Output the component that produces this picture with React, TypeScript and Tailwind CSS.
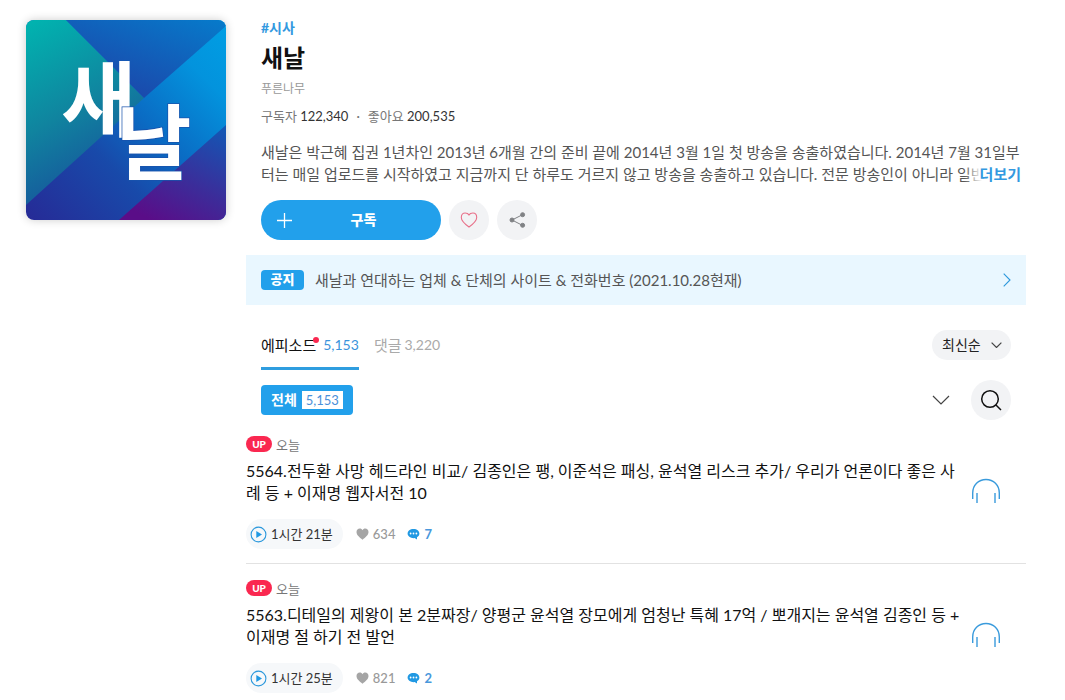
import React from "react";

type Episode = {
  id: number;
  title: string;
  date: string;
  length: string;
  likes: number;
  comments: number;
};

const episodes: Episode[] = [
  {
    id: 5564,
    title:
      "5564.전두환 사망 헤드라인 비교/ 김종인은 팽, 이준석은 패싱, 윤석열 리스크 추가/ 우리가 언론이다 좋은 사례 등 + 이재명 웹자서전 10",
    date: "오늘",
    length: "1시간 21분",
    likes: 634,
    comments: 7,
  },
  {
    id: 5563,
    title:
      "5563.디테일의 제왕이 본 2분짜장/ 양평군 윤석열 장모에게 엄청난 특혜 17억 / 뽀개지는 윤석열 김종인 등 + 이재명 절 하기 전 발언",
    date: "오늘",
    length: "1시간 25분",
    likes: 821,
    comments: 2,
  },
];

function Cover() {
  return (
    <svg
      viewBox="0 0 200 200"
      role="img"
      aria-label="새날"
      className="size-[200px] shrink-0 rounded-lg shadow-[0_0_10px_rgba(0,0,0,0.2)]"
    >
      <defs>
        <linearGradient id="teal" x1="0" y1="0" x2="0.35" y2="1">
          <stop offset="0" stopColor="#00b5b0" />
          <stop offset="0.55" stopColor="#10849f" />
          <stop offset="1" stopColor="#17539c" />
        </linearGradient>
        <linearGradient id="top" x1="0.3" y1="0.9" x2="1" y2="0">
          <stop offset="0" stopColor="#1b48ab" />
          <stop offset="1" stopColor="#067bcb" />
        </linearGradient>
        <linearGradient id="band" x1="1" y1="0" x2="0" y2="1">
          <stop offset="0" stopColor="#009fe4" />
          <stop offset="0.2" stopColor="#0393dd" />
          <stop offset="0.45" stopColor="#0a6cc4" />
          <stop offset="0.65" stopColor="#184aaa" />
          <stop offset="1" stopColor="#262a96" />
        </linearGradient>
        <linearGradient id="low" x1="0.9" y1="0" x2="0.3" y2="1">
          <stop offset="0" stopColor="#1456b4" />
          <stop offset="0.55" stopColor="#3b2d9a" />
          <stop offset="1" stopColor="#5a0d88" />
        </linearGradient>
      </defs>
      <rect width="200" height="200" fill="url(#band)" />
      <path d="M0 0H40L118 78L0 185Z" fill="url(#teal)" />
      <path d="M40 0H200V6L118 78Z" fill="url(#top)" />
      <path d="M200 105V200H93Z" fill="url(#low)" />
      <g
        fill="#fff"
        fontFamily="'Noto Sans CJK KR', sans-serif"
        fontWeight="700"
        fontSize="82"
      >
        <text x="35" y="110">새</text>
        <text x="90" y="153" stroke="#1853ad" strokeWidth="1.500" paintOrder="stroke">
          날
        </text>
      </g>
    </svg>
  );
}

function HeartLine() {
  return (
    <svg width="18" height="16" viewBox="0 0 18 16" fill="none" stroke="#e8718a" strokeWidth="1.1">
      <path d="M9 15C5.500 12.400 1.300 8.900 1.300 5.400C1.300 2.800 3 1 5.100 1C6.900 1 8.300 1.700 9 2.900C9.700 1.700 11.100 1 12.900 1C15 1 16.700 2.800 16.700 5.400C16.700 8.900 12.500 12.400 9 15Z" />
    </svg>
  );
}

function Share() {
  return (
    <svg width="17" height="16" viewBox="0 0 17 16" fill="#808285" stroke="#808285">
      <path d="M13.500 2.700L3 8L13.500 13.400" fill="none" strokeWidth="1" />
      <circle cx="13.600" cy="2.700" r="2" />
      <circle cx="3" cy="8" r="2" />
      <circle cx="13.600" cy="13.300" r="2" />
    </svg>
  );
}

function ChevronDown({ className }: { className: string }) {
  return (
    <svg
      viewBox="0 0 18 10"
      fill="none"
      stroke="#444"
      className={className}
    >
      <path d="M1 1L9 9L17 1" strokeWidth="1.200" vectorEffect="non-scaling-stroke" />
    </svg>
  );
}

function EpisodeRow({ episode }: { episode: Episode }) {
  return (
    <li className="flex items-center border-b border-[#e2e2e2] pt-4 pb-[14px]">
      <div className="min-w-0 flex-1">
        <div className="flex h-4 items-center gap-1">
          <span className="flex h-4 w-[26px] items-center justify-center rounded-full bg-[#fa2850] text-[10px] font-black text-white">
            UP
          </span>
          <span className="pt-[2px] text-[13px] leading-4 text-[#777]">{episode.date}</span>
        </div>
        <h3 className="mt-2 text-base leading-[22px] break-all text-[#111]">
          <a href="#episode">{episode.title}</a>
        </h3>
        <div className="mt-[15px] flex items-center text-[13px] leading-5">
          <button
            type="button"
            className="flex h-[30px] items-center gap-1 rounded-full bg-[#f6f8fa] pr-[10px] pl-1 text-[#333]"
          >
            <svg width="17" height="17" viewBox="0 0 17 17">
              <circle cx="8.500" cy="8.500" r="7.400" fill="none" stroke="#2b98dc" strokeWidth="1.100" />
              <path d="M6.300 5L12 8.500L6.300 12Z" fill="#2199e3" />
            </svg>
            {episode.length}
          </button>
          <span className="ml-[13px] flex items-center gap-1 font-medium text-[#999]">
            <svg width="13" height="12" viewBox="0 0 13 12" fill="#a5a5a5">
              <path d="M6.500 11.800C3.500 9.300 0.500 7 0.500 4C0.500 2 2 0.600 3.700 0.600C5 0.600 6 1.300 6.500 2.300C7 1.300 8 0.600 9.300 0.600C11 0.600 12.500 2 12.500 4C12.500 7 9.500 9.300 6.500 11.800Z" />
            </svg>
            {episode.likes}
          </span>
          <span className="ml-3 flex items-center gap-1 font-bold text-[#4a98dc]">
            <svg width="13" height="12" viewBox="0 0 13 12" fill="#2199e3">
              <path d="M6.500 1C10 1 12.400 3 12.400 5.600C12.400 7.200 11.500 8.500 10 9.300V11.600L7.600 10.100C3.500 10.400 0.600 8.500 0.600 5.600C0.600 3 3 1 6.500 1Z" />
              <g fill="#fff">
                <circle cx="3.600" cy="5.500" r="0.900" />
                <circle cx="6.500" cy="5.500" r="0.900" />
                <circle cx="9.400" cy="5.500" r="0.900" />
              </g>
            </svg>
            {episode.comments}
          </span>
        </div>
      </div>
      <button type="button" aria-label="듣기" className="mr-[25px] ml-[9px] shrink-0 pb-1">
        <svg width="30" height="26" viewBox="0 0 30 26" fill="none" stroke="#3a9bdc" strokeWidth="1.400">
          <path d="M1.700 21V15C1.700 7 7.500 1.500 15 1.500S28.300 7 28.300 15V21" />
          <path d="M6 15V25M24 15V25" />
        </svg>
      </button>
    </li>
  );
}

export default function App() {
  return (
    <div className="flex items-start gap-5 bg-white pt-[18px] pr-[39px] pb-1 pl-[26px] font-['Lato','Noto_Sans_CJK_KR',sans-serif] text-[#555]">
      <div className="pt-[2px]">
        <Cover />
      </div>
      <main className="min-w-0 flex-1">
        <header className="px-[15px]">
          <a href="#category" className="block text-sm leading-5 font-bold text-[#3399e0]">
            #시사
          </a>
          <h1 className="mt-1 text-2xl leading-8 font-bold text-[#111]">새날</h1>
          <p className="mt-[7px] text-xs leading-4 text-[#999]">푸른나무</p>
          <p className="mt-[9px] flex text-[13px] leading-5 text-[#777]">
            <span>
              구독자 <span className="text-[#333]">122,340</span>
            </span>
            <span className="mx-2">·</span>
            <span>
              좋아요 <span className="text-[#333]">200,535</span>
            </span>
          </p>
          <div className="relative -mr-[10px] mt-[15px] h-11 overflow-hidden text-[15px] leading-[22px] break-all">
            <p>
              새날은 박근혜 집권 1년차인 2013년 6개월 간의 준비 끝에 2014년 3월 1일 첫 방송을
              송출하였습니다. 2014년 7월 31일부터는 매일 업로드를 시작하였고 지금까지 단 하루도
              거르지 않고 방송을 송출하고 있습니다. 전문 방송인이 아니라 일반
            </p>
            <button
              type="button"
              className="absolute right-0 bottom-0 bg-linear-to-r from-white/0 to-white to-[18px] pl-4 leading-[22px] font-bold text-[#3399e0]"
            >
              더보기
            </button>
          </div>
          <div className="mt-[15px] flex gap-2">
            <button
              type="button"
              className="flex h-10 w-[180px] items-center rounded-full bg-[#22a0eb] pr-[30px] pl-4 text-sm font-black text-white"
            >
              <svg width="15" height="15" viewBox="0 0 15 15" stroke="#fff" strokeWidth="1.300">
                <path d="M7.500 0V15M0 7.500H15" />
              </svg>
              <span className="flex-1 pl-6 text-center">구독</span>
            </button>
            <button
              type="button"
              aria-label="좋아요"
              className="flex size-10 items-center justify-center rounded-full bg-[#f2f3f5]"
            >
              <HeartLine />
            </button>
            <button
              type="button"
              aria-label="공유"
              className="flex size-10 items-center justify-center rounded-full bg-[#f2f3f5]"
            >
              <Share />
            </button>
          </div>
        </header>

        <a href="#notice" className="mt-[15px] flex h-[50px] items-center bg-[#e9f7ff] px-[15px]">
          <span className="flex h-5 w-[43px] items-center justify-center rounded bg-[#22a0eb] text-[13px] font-black text-white">
            공지
          </span>
          <span className="ml-[11px] flex-1 text-[15px]">
            새날과 연대하는 업체 &amp; 단체의 사이트 &amp; 전화번호 (2021.10.28현재)
          </span>
          <svg width="8" height="14" viewBox="0 0 8 14" fill="none" stroke="#2b98dc" strokeWidth="1.100">
            <path d="M0.700 0.700L7 7L0.700 13.300" />
          </svg>
        </a>

        <div className="mt-[15px] flex h-[50px] items-center justify-between px-[15px]">
          <nav className="flex h-full gap-[15px] text-[15px]">
            <a
              href="#episodes"
              className="flex items-center border-b-[3px] border-[#2f9ddf] pt-[3px] text-[#111]"
            >
              <span className="relative">
                에피소드
                <i className="absolute top-[3px] -right-[3px] size-[6px] rounded-full bg-[#fa2850]" />
              </span>
              <span className="ml-[7px] text-sm text-[#3a94dc]">5,153</span>
            </a>
            <a href="#comments" className="flex items-center gap-[3px] text-[#aaa]">
              댓글 <span className="text-sm">3,220</span>
            </a>
          </nav>
          <div className="relative">
            <select
              aria-label="정렬"
              className="h-[30px] w-[79px] appearance-none rounded-full bg-[#f2f3f5] pl-[10px] text-sm text-[#222]"
            >
              <option>최신순</option>
            </select>
            <ChevronDown className="pointer-events-none absolute top-3 right-[9px] w-[11px]" />
          </div>
        </div>

        <div className="mt-[10px] flex h-10 items-center px-[15px]">
          <button
            type="button"
            className="flex h-[30px] items-center gap-[5px] rounded bg-[#22a0eb] px-[10px] text-sm font-bold text-white"
          >
            전체
            <span className="bg-white px-1 text-[13px] leading-[18px] font-normal text-[#4a90d9]">
              5,153
            </span>
          </button>
          <button type="button" aria-label="펼치기" className="ml-auto">
            <ChevronDown className="w-[18px]" />
          </button>
          <button
            type="button"
            aria-label="검색"
            className="ml-[21px] flex size-10 items-center justify-center rounded-full bg-[#f2f3f5]"
          >
            <svg width="22" height="22" viewBox="0 0 22 22" fill="none" stroke="#111" strokeWidth="1.500">
              <circle cx="10" cy="10" r="8.300" />
              <path d="M16 16L21 21" />
            </svg>
          </button>
        </div>

        <ul>
          {episodes.map((episode) => (
            <EpisodeRow key={episode.id} episode={episode} />
          ))}
        </ul>
      </main>
    </div>
  );
}
